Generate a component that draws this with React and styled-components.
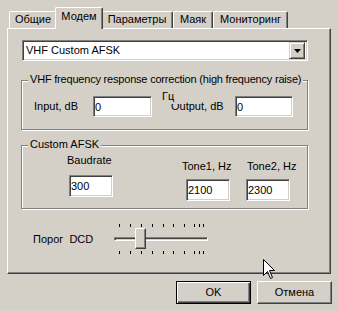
import React from 'react';
import styled, { createGlobalStyle, css } from 'styled-components';

const FACE = '#d4d0c8';
const LIGHT = '#ffffff';
const SHADOW = '#808080';
const DARK = '#404040';

const Global = createGlobalStyle`
  html, body { margin: 0; padding: 0; background: ${FACE}; }
  body { font-family: "Liberation Sans", Arial, sans-serif; font-size: 11px; color: #000; }
  * { box-sizing: border-box; }
`;

const Dialog = styled.div`
  position: relative;
  width: 338px;
  height: 311px;
  overflow: hidden;
  background: ${FACE};
  padding-top: 7px;
  font-family: "Liberation Sans", Arial, sans-serif;
  font-size: 11px;
  line-height: 13px;
  color: #000;
`;

const TabStrip = styled.div`
  display: flex;
  align-items: flex-end;
  height: 21px;
  padding-left: 9px;
`;

const Tab = styled.div`
  position: relative;
  flex: none;
  width: ${(p) => p.$w}px;
  height: 17px;
  display: flex;
  justify-content: center;
  align-items: flex-start;
  padding-top: 1px;
  white-space: nowrap;
  background: ${FACE};
  border-top: 1px solid ${LIGHT};
  border-left: 1px solid ${LIGHT};
  border-right: 1px solid ${DARK};
  border-top-left-radius: 2px;
  border-top-right-radius: 2px;
  box-shadow: inset -1px 0 0 ${SHADOW};
  ${(p) =>
    p.$active &&
    css`
      width: ${p.$w + 4}px;
      height: 22px;
      margin: 0 -2px -1px;
      padding-top: 2px;
      z-index: 1;
    `}
`;

const Panel = styled.div`
  margin-left: 7px;
  width: 324px;
  height: 246px;
  border: 1px solid;
  border-color: ${LIGHT} ${DARK} ${DARK} ${LIGHT};
  box-shadow: inset -1px -1px 0 ${SHADOW};
  padding: 11px 0 0 14px;
`;

const sunken = css`
  background: #fff;
  border: 1px solid;
  border-color: ${SHADOW} ${LIGHT} ${LIGHT} ${SHADOW};
  box-shadow: inset 1px 1px 0 ${DARK}, inset -1px -1px 0 ${FACE};
`;

const Combo = styled.div`
  ${sunken};
  width: 286px;
  height: 21px;
  display: flex;
  align-items: center;
  padding: 2px 2px 2px 3px;
  white-space: nowrap;
`;

const ComboText = styled.span`
  flex: 1;
`;

const ComboButton = styled.div`
  width: 16px;
  height: 17px;
  flex: none;
  display: flex;
  align-items: center;
  justify-content: center;
  background: ${FACE};
  border: 1px solid;
  border-color: ${FACE} ${DARK} ${DARK} ${FACE};
  box-shadow: inset 1px 1px 0 ${LIGHT}, inset -1px -1px 0 ${SHADOW};
`;

const Group = styled.div`
  position: relative;
  margin-left: -1px;
  margin-top: ${(p) => p.$mt}px;
  width: 287px;
  height: ${(p) => p.$h}px;
  border: 1px solid ${SHADOW};
  box-shadow: inset 1px 1px 0 ${LIGHT}, 1px 1px 0 ${LIGHT};
`;

const Legend = styled.span`
  position: absolute;
  left: 6px;
  top: -8px;
  padding: 0 2px;
  background: ${FACE};
  white-space: nowrap;
  letter-spacing: ${(p) => p.$ls || 0}px;
`;

const Row = styled.div`
  display: flex;
  align-items: ${(p) => p.$align || 'center'};
  margin-top: ${(p) => p.$mt || 0}px;
  padding-left: ${(p) => p.$pl || 0}px;
`;

const Label = styled.span`
  position: relative;
  flex: none;
  width: ${(p) => p.$w}px;
  margin-left: ${(p) => p.$ml || 0}px;
  white-space: nowrap;
`;

const Overlay = styled.span`
  position: absolute;
  left: -9px;
  top: -10px;
  width: 17px;
  height: 14px;
  background: ${FACE};
`;

const Edit = styled.input`
  ${sunken};
  flex: none;
  width: ${(p) => p.$w}px;
  height: ${(p) => p.$h || 21}px;
  margin: 0 0 0 ${(p) => p.$ml || 0}px;
  padding: 0 0 0 1px;
  font: inherit;
  font-size: 11px;
  color: #000;
  outline: none;
`;

const Field = styled.div`
  flex: none;
  display: flex;
  flex-direction: column;
  align-items: flex-start;
  width: ${(p) => p.$w}px;
  margin-left: ${(p) => p.$x}px;
  padding-top: ${(p) => p.$y}px;
  gap: ${(p) => p.$gap}px;
`;

const FieldLabel = styled.span`
  margin-left: ${(p) => p.$ml || 0}px;
  white-space: nowrap;
`;

const SliderRow = styled.div`
  display: flex;
  align-items: center;
  margin-top: 14px;
  height: 32px;
  padding-left: 11px;
`;

const Slider = styled.div`
  position: relative;
  flex: none;
  width: 94px;
  height: 32px;
`;

const Ticks = styled.svg`
  position: absolute;
  left: 0;
  top: ${(p) => p.$top}px;
`;

const Track = styled.div`
  position: absolute;
  left: 0;
  top: 14px;
  width: 94px;
  height: 4px;
  border: 1px solid;
  border-color: ${SHADOW} ${LIGHT} ${LIGHT} ${SHADOW};
  box-shadow: inset 1px 1px 0 ${DARK}, inset -1px -1px 0 ${FACE};
  background: ${FACE};
`;

const Thumb = styled.div`
  position: absolute;
  left: ${(p) => p.$x}px;
  top: 5px;
  width: 11px;
  height: 21px;
  background: ${FACE};
  border: 1px solid;
  border-color: ${LIGHT} ${DARK} ${DARK} ${LIGHT};
  box-shadow: inset -1px -1px 0 ${SHADOW};
`;

const ButtonRow = styled.div`
  display: flex;
  justify-content: flex-end;
  gap: 6px;
  margin-top: 7px;
  padding-right: 6px;
`;

const Button = styled.div`
  width: 75px;
  height: 23px;
  display: flex;
  align-items: center;
  justify-content: center;
  background: ${FACE};
  border: 1px solid;
  border-color: ${LIGHT} ${DARK} ${DARK} ${LIGHT};
  box-shadow: inset -1px -1px 0 ${SHADOW};
  ${(p) =>
    p.$default &&
    css`
      border-color: #000;
      box-shadow: inset 1px 1px 0 ${LIGHT}, inset -1px -1px 0 ${DARK}, inset -2px -2px 0 ${SHADOW};
    `}
`;

const Cursor = styled.svg`
  position: absolute;
  left: 263px;
  top: 259px;
`;

const tabs = [
  { label: 'Общие', w: 48 },
  { label: 'Модем', w: 44, active: true },
  { label: 'Параметры', w: 72 },
  { label: 'Маяк', w: 40 },
  { label: 'Мониторинг', w: 75 },
];

const tickXs = [5, 16, 27, 38, 49, 59, 70, 80, 85, 89];

function TickRow({ top }) {
  return (
    <Ticks $top={top} width="94" height="3" viewBox="0 0 94 3">
      {tickXs.map((x) => (
        <rect key={x} x={x} y="0" width="1" height="3" fill="#000" />
      ))}
    </Ticks>
  );
}

export default function App() {
  return (
    <>
      <Global />
      <Dialog>
        <TabStrip>
          {tabs.map((t) => (
            <Tab key={t.label} $w={t.w} $active={t.active}>
              {t.label}
            </Tab>
          ))}
        </TabStrip>
        <Panel>
          <Combo>
            <ComboText>VHF Custom AFSK</ComboText>
            <ComboButton>
              <svg width="7" height="4" viewBox="0 0 7 4">
                <path d="M0 0h7L3.5 4z" fill="#000" />
              </svg>
            </ComboButton>
          </Combo>

          <Group $mt={19} $h={50}>
            <Legend $ls={-0.2}>VHF frequency response correction (high frequency raise)</Legend>
            <Row $mt={15} $pl={12}>
              <Label $w={59}>Input, dB</Label>
              <Edit $w={59} readOnly value="0" />
              <Label $w={64} $ml={19}>
                Output, dB
                <Overlay>Гц</Overlay>
              </Label>
              <Edit $w={58} readOnly value="0" />
            </Row>
          </Group>

          <Group $mt={15} $h={64}>
            <Legend>Custom AFSK</Legend>
            <Row $align="flex-start">
              <Field $w={46} $x={45} $y={8} $gap={8}>
                <FieldLabel>Baudrate</FieldLabel>
                <Edit $w={44} $h={22} $ml={2} readOnly value="300" />
              </Field>
              <Field $w={49} $x={69} $y={14} $gap={6}>
                <FieldLabel>Tone1, Hz</FieldLabel>
                <Edit $w={44} $h={22} $ml={4} readOnly value="2100" />
              </Field>
              <Field $w={50} $x={15} $y={14} $gap={6}>
                <FieldLabel $ml={1}>Tone2, Hz</FieldLabel>
                <Edit $w={44} $h={22} readOnly value="2300" />
              </Field>
            </Row>
          </Group>

          <SliderRow>
            <Label $w={81}>Порог&nbsp; DCD</Label>
            <Slider>
              <TickRow top={1} />
              <Track />
              <Thumb $x={21} />
              <TickRow top={28} />
            </Slider>
          </SliderRow>
        </Panel>

        <ButtonRow>
          <Button $default>OK</Button>
          <Button>Отмена</Button>
        </ButtonRow>

        <Cursor width="13" height="21" viewBox="0 0 13 21">
          <path
            d="M0.5 0.5 V16.5 L4.5 12.5 L7.5 19.5 L9.5 18.5 L6.5 11.5 H11.5 Z"
            fill="#fff"
            stroke="#000"
            strokeWidth="1"
            strokeLinejoin="miter"
          />
        </Cursor>
      </Dialog>
    </>
  );
}
